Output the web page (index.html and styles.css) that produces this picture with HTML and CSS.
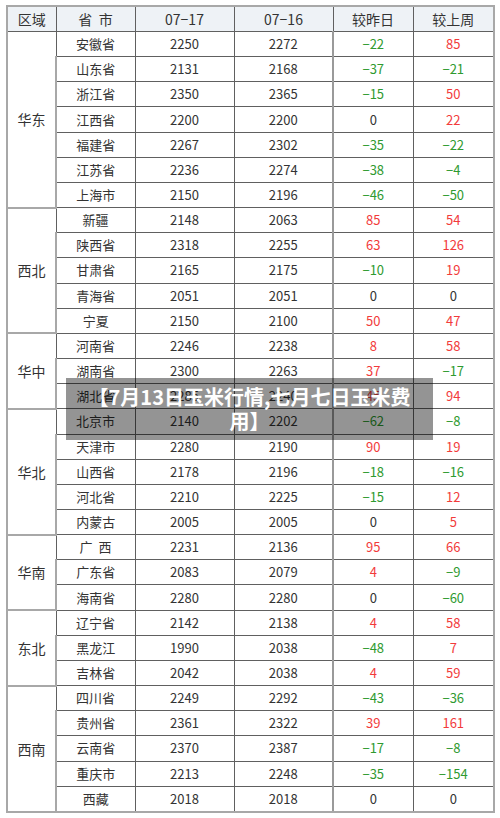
FILE: index.html
```html
<!DOCTYPE html>
<html lang="zh-CN">
<head>
<meta charset="utf-8">
<title>玉米价格</title>
<link rel="stylesheet" href="styles.css">
</head>
<body>
<div class="page">
<table class="price">
<colgroup><col class="c1"><col class="c2"><col class="c3"><col class="c4"><col class="c5"><col class="c6"></colgroup>
<thead>
<tr><th>区域</th><th>省&nbsp;&nbsp;市</th><th>07−17</th><th>07−16</th><th>较昨日</th><th>较上周</th></tr>
</thead>
<tbody>
<tr><td class="region" rowspan="7">华东</td><td>安徽省</td><td>2250</td><td>2272</td><td class="dn">−22</td><td class="up">85</td></tr>
<tr><td>山东省</td><td>2131</td><td>2168</td><td class="dn">−37</td><td class="dn">−21</td></tr>
<tr><td>浙江省</td><td>2350</td><td>2365</td><td class="dn">−15</td><td class="up">50</td></tr>
<tr><td>江西省</td><td>2200</td><td>2200</td><td>0</td><td class="up">22</td></tr>
<tr><td>福建省</td><td>2267</td><td>2302</td><td class="dn">−35</td><td class="dn">−22</td></tr>
<tr><td>江苏省</td><td>2236</td><td>2274</td><td class="dn">−38</td><td class="dn">−4</td></tr>
<tr><td>上海市</td><td>2150</td><td>2196</td><td class="dn">−46</td><td class="dn">−50</td></tr>

<tr><td class="region" rowspan="5">西北</td><td>新疆</td><td>2148</td><td>2063</td><td class="up">85</td><td class="up">54</td></tr>
<tr><td>陕西省</td><td>2318</td><td>2255</td><td class="up">63</td><td class="up">126</td></tr>
<tr><td>甘肃省</td><td>2165</td><td>2175</td><td class="dn">−10</td><td class="up">19</td></tr>
<tr><td>青海省</td><td>2051</td><td>2051</td><td>0</td><td>0</td></tr>
<tr><td>宁夏</td><td>2150</td><td>2100</td><td class="up">50</td><td class="up">47</td></tr>

<tr><td class="region" rowspan="3">华中</td><td>河南省</td><td>2246</td><td>2238</td><td class="up">8</td><td class="up">58</td></tr>
<tr><td>湖南省</td><td>2300</td><td>2263</td><td class="up">37</td><td class="dn">−17</td></tr>
<tr><td>湖北省</td><td>2285</td><td>2240</td><td class="up">45</td><td class="up">94</td></tr>

<tr><td class="region" rowspan="5">华北</td><td>北京市</td><td>2140</td><td>2202</td><td class="dn">−62</td><td class="dn">−8</td></tr>
<tr><td>天津市</td><td>2280</td><td>2190</td><td class="up">90</td><td class="up">19</td></tr>
<tr><td>山西省</td><td>2178</td><td>2196</td><td class="dn">−18</td><td class="dn">−16</td></tr>
<tr><td>河北省</td><td>2210</td><td>2225</td><td class="dn">−15</td><td class="up">12</td></tr>
<tr><td>内蒙古</td><td>2005</td><td>2005</td><td>0</td><td class="up">5</td></tr>

<tr><td class="region" rowspan="3">华南</td><td>广&nbsp;&nbsp;西</td><td>2231</td><td>2136</td><td class="up">95</td><td class="up">66</td></tr>
<tr><td>广东省</td><td>2083</td><td>2079</td><td class="up">4</td><td class="dn">−9</td></tr>
<tr><td>海南省</td><td>2280</td><td>2280</td><td>0</td><td class="dn">−60</td></tr>

<tr><td class="region" rowspan="3">东北</td><td>辽宁省</td><td>2142</td><td>2138</td><td class="up">4</td><td class="up">58</td></tr>
<tr><td>黑龙江</td><td>1990</td><td>2038</td><td class="dn">−48</td><td class="up">7</td></tr>
<tr><td>吉林省</td><td>2042</td><td>2038</td><td class="up">4</td><td class="up">59</td></tr>

<tr><td class="region" rowspan="5">西南</td><td>四川省</td><td>2249</td><td>2292</td><td class="dn">−43</td><td class="dn">−36</td></tr>
<tr><td>贵州省</td><td>2361</td><td>2322</td><td class="up">39</td><td class="up">161</td></tr>
<tr><td>云南省</td><td>2370</td><td>2387</td><td class="dn">−17</td><td class="dn">−8</td></tr>
<tr><td>重庆市</td><td>2213</td><td>2248</td><td class="dn">−35</td><td class="dn">−154</td></tr>
<tr><td>西藏</td><td>2018</td><td>2018</td><td>0</td><td>0</td></tr>
</tbody>
</table>
<div class="caption">【7月13日玉米行情,七月七日玉米费用】</div>
</div>
</body>
</html>
```
FILE: styles.css
```css
html, body {
  margin: 0;
  padding: 0;
  background: #ffffff;
}
.page {
  position: relative;
  padding: 5px 0 0 6px;
  width: 500px;
  height: 818px;
  box-sizing: border-box;
}
.price {
  border-collapse: collapse;
  table-layout: fixed;
  width: 487px;
  border: 2px solid #a8a8a8;
  font-family: "Noto Sans CJK SC", "Liberation Sans", sans-serif;
  font-size: 13px;
  color: #333333;
}
.c1 { width: 49px; }
.c2 { width: 79px; }
.c3 { width: 99px; }
.c4 { width: 99px; }
.c5 { width: 80px; }
.c6 { width: 81px; }
.price th {
  background: #eef2f6;
  font-weight: normal;
  font-size: 14px;
  height: 24px;
  padding: 0;
  border: 1px solid #606060;
  text-align: center;
  line-height: 16px;
}
.price td {
  height: 24.16px;
  padding: 0;
  border: 1px solid #606060;
  text-align: center;
  line-height: 16px;
}
.price td:first-child,
.price th:first-child {
  border-left: 2px solid #a8a8a8;
}
.price td:last-child,
.price th:last-child {
  border-right: 2px solid #a8a8a8;
}
.price tbody tr:last-child td,
.price td.region {
  border-bottom: 2px solid #a8a8a8;
}
.price td.region {
  font-size: 14px;
}
.price tr > td:not(.region):nth-last-child(2) {
  border-left: 2px solid #9a9a9a;
}
.up { color: #f23b3b; }
.dn { color: #2f9a2f; }
.caption {
  position: absolute;
  left: 66px;
  top: 378px;
  width: 367px;
  height: 62px;
  box-sizing: border-box;
  padding: 7px 12px;
  background: rgba(0, 0, 0, 0.42);
  color: #ffffff;
  font-family: "Noto Sans CJK SC", "Liberation Sans", sans-serif;
  font-weight: bold;
  font-size: 20px;
  line-height: 24px;
  text-align: center;
}
```
